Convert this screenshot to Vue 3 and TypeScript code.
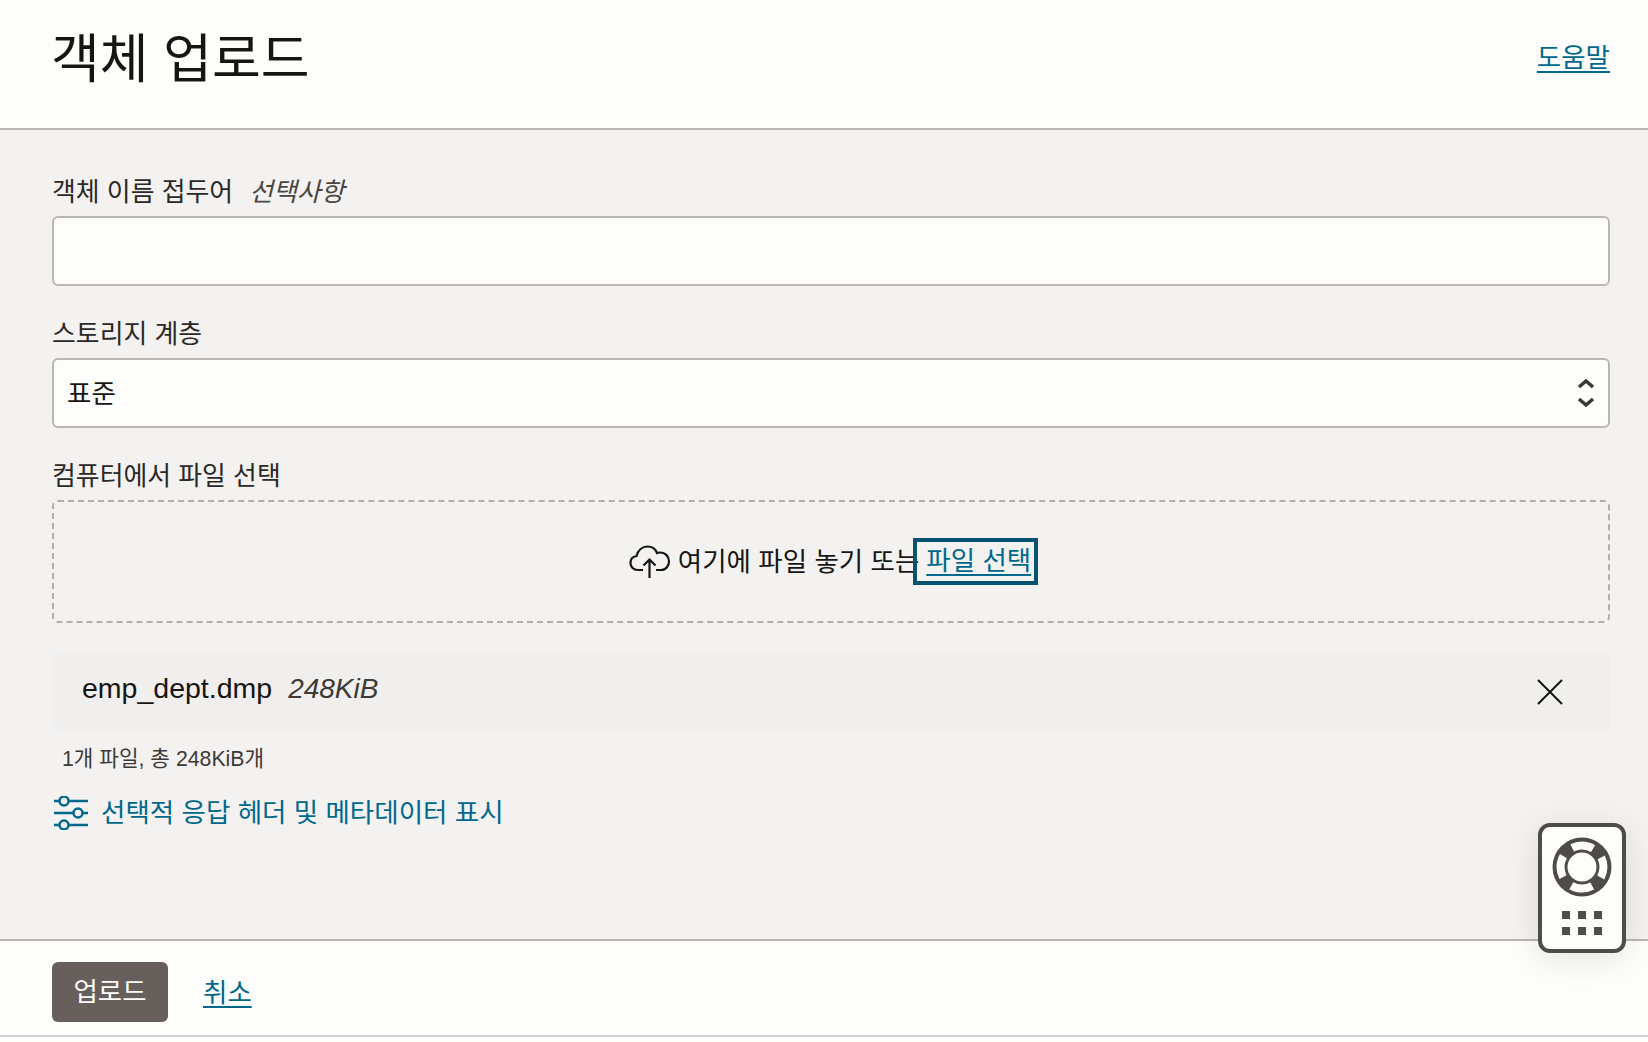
<template>
  <div class="page">
    <header class="header">
      <h1 class="title">객체 업로드</h1>
      <a class="link help" href="#">도움말</a>
    </header>

    <main class="body">
      <div class="field">
        <label class="label">객체 이름 접두어<em class="optional">선택사항</em></label>
        <input class="input" type="text" />
      </div>

      <div class="field">
        <label class="label">스토리지 계층</label>
        <div class="input select">
          <span class="select-value">표준</span>
          <svg class="chevrons" width="18" height="32" viewBox="0 0 18 32">
            <path d="M2 10 L9 4 L16 10" />
            <path d="M2 22 L9 28 L16 22" />
          </svg>
        </div>
      </div>

      <div class="field drop-field">
        <label class="label">컴퓨터에서 파일 선택</label>
        <div class="drop">
          <svg class="cloud" width="42" height="34" viewBox="0 0 42 34">
            <path d="M14 25 H9 C4 25 1.500 21.500 1.500 18 C1.500 14 4 11.500 7.500 11 C9 5 13.500 1.500 18.500 1.500 C23 1.500 26.500 4 28 8 C29 7.500 30 7.500 31 7.500 C36.500 7.500 40 11.500 40 16.500 C40 21.500 36.500 25 32 25 H27" />
            <path d="M20.500 33 V15 M14.500 20.500 L20.500 14.500 L26.500 20.500" />
          </svg>
          <span class="drop-text">여기에 파일 놓기 또는</span>
          <a class="link focused" href="#">파일 선택</a>
        </div>
      </div>

      <div class="file-row">
        <span class="file-name">emp_dept.dmp</span>
        <em class="file-size">248KiB</em>
        <svg class="close" width="28" height="28" viewBox="0 0 28 28">
          <path d="M2 2 L26 26 M26 2 L2 26" />
        </svg>
      </div>
      <div class="summary">1개 파일, 총 248KiB개</div>

      <a class="options" href="#">
        <svg class="sliders" width="34" height="34" viewBox="0 0 34 34">
          <path d="M0 5 H5 M15 5 H34 M0 17 H19 M29 17 H34 M0 29 H5 M15 29 H34" />
          <circle cx="10" cy="5" r="4.500" />
          <circle cx="24" cy="17" r="4.500" />
          <circle cx="10" cy="29" r="4.500" />
        </svg>
        <span>선택적 응답 헤더 및 메타데이터 표시</span>
      </a>
    </main>

    <footer class="footer">
      <button class="primary" type="button">업로드</button>
      <a class="link" href="#">취소</a>
    </footer>

    <div class="widget">
      <svg width="60" height="60" viewBox="0 0 60 60">
        <circle class="buoy-body" cx="30" cy="30" r="29.500" />
        <circle class="buoy-arcs" cx="30" cy="30" r="21.500" />
        <circle class="buoy-hole" cx="30" cy="30" r="14.500" />
      </svg>
      <div class="dots">
        <i v-for="n in 6" :key="n" />
      </div>
    </div>
  </div>
</template>

<script setup lang="ts">
</script>

<style>
html,
body {
  background: #fdfdfb;
}
</style>

<style scoped>
.page {
  position: relative;
  height: 1042px;
  overflow: hidden;
  display: flex;
  flex-direction: column;
  color: #161513;
  font-family: "Liberation Sans", "Noto Sans CJK KR", sans-serif;
  font-size: 26.500px;
  background: #fdfdfb;
}

.header {
  height: 130px;
  flex: none;
  box-sizing: border-box;
  display: flex;
  justify-content: space-between;
  align-items: flex-start;
  padding: 24px 38px 0 51px;
  border-bottom: 2px solid #bcb6b1;
}

.title {
  margin: 0;
  font-size: 53px;
  font-weight: 400;
  line-height: 72px;
}

.link {
  color: #00688c;
  text-decoration: underline;
  text-decoration-thickness: 2px;
  text-underline-offset: 4px;
}

.help {
  line-height: 36px;
  margin-top: 16px;
}

.body {
  flex: none;
  height: 809px;
  box-sizing: border-box;
  padding: 44px 38px 0 52px;
  background: #f3f2f1;
}

.field {
  margin-bottom: 30px;
}

.drop-field {
  margin-bottom: 29px;
}

.label {
  display: block;
  font-size: 25.900px;
  line-height: 36px;
  margin-bottom: 6px;
  color: #2b2926;
}

.optional {
  margin-left: 16px;
  color: #4a4643;
}

.input {
  display: block;
  width: 100%;
  height: 70px;
  box-sizing: border-box;
  border: 2px solid #bcb6b1;
  border-radius: 6px;
  background: #fdfdfb;
  outline: none;
}

.select {
  display: flex;
  align-items: center;
  justify-content: space-between;
  padding: 0 13px;
}

.select-value {
  margin-bottom: 4px;
}

.chevrons {
  fill: none;
  stroke: #3a3734;
  stroke-width: 3.500;
}

.drop {
  height: 123px;
  box-sizing: border-box;
  border: 2px dashed #b3aeaa;
  border-radius: 6px;
  display: flex;
  align-items: center;
  justify-content: center;
  padding: 1px 0 0 5px;
}

.cloud {
  margin-right: 7px;
  fill: none;
  stroke: #161513;
  stroke-width: 2.200;
}

.drop-text {
  line-height: 39px;
}

.focused {
  border: 4px solid #04536f;
  padding: 0 3px 0 9px;
  margin: -1px 0 0 -6px;
  line-height: 39px;
}

.file-row {
  height: 79px;
  box-sizing: border-box;
  display: flex;
  align-items: center;
  padding: 0 46px 0 30px;
  background: #f0efee;
  border-radius: 4px;
  font-size: 28px;
}

.file-name {
  font-size: 28.500px;
  margin-bottom: 6px;
}

.file-size {
  margin: 0 0 6px 16px;
  color: #3d3a37;
}

.close {
  margin-left: auto;
  fill: none;
  stroke: #161513;
  stroke-width: 2;
}

.summary {
  margin: 12px 0 0 10px;
  font-size: 21.300px;
  line-height: 32px;
  color: #3d3a37;
}

.options {
  display: flex;
  align-items: center;
  gap: 13px;
  margin: 19px 0 0 2px;
  color: #00688c;
  text-decoration: none;
  line-height: 38px;
}

.sliders {
  fill: none;
  stroke: #00688c;
  stroke-width: 2.500;
}

.footer {
  flex: none;
  height: 98px;
  box-sizing: border-box;
  display: flex;
  align-items: flex-start;
  gap: 35px;
  padding: 21px 52px 0;
  border-top: 2px solid #bcb6b1;
  border-bottom: 2px solid #cfcfcf;
}

.footer .link {
  line-height: 62px;
}

.primary {
  width: 116px;
  height: 60px;
  padding: 0;
  border: none;
  border-radius: 6px;
  background: #665f5b;
  color: #fdfdfb;
  font: inherit;
  line-height: 58px;
}

.widget {
  position: absolute;
  left: 1538px;
  top: 823px;
  width: 88px;
  height: 130px;
  box-sizing: border-box;
  display: flex;
  flex-direction: column;
  align-items: center;
  padding-top: 10px;
  border: 4px solid #4f4b48;
  border-radius: 12px;
  background: #fdfdfb;
  box-shadow: 0 6px 32px rgba(0, 0, 0, 0.1);
}

.buoy-body {
  fill: #4f4b48;
}

.buoy-arcs {
  fill: none;
  stroke: #fdfdfb;
  stroke-width: 8;
  stroke-dasharray: 21.800 12;
  stroke-dashoffset: 10.900;
}

.buoy-hole {
  fill: #fdfdfb;
}

.dots {
  display: grid;
  grid-template-columns: repeat(3, 8px);
  gap: 8px;
  margin-top: 14px;
}

.dots i {
  width: 8px;
  height: 8px;
  background: #4f4b48;
}
</style>
